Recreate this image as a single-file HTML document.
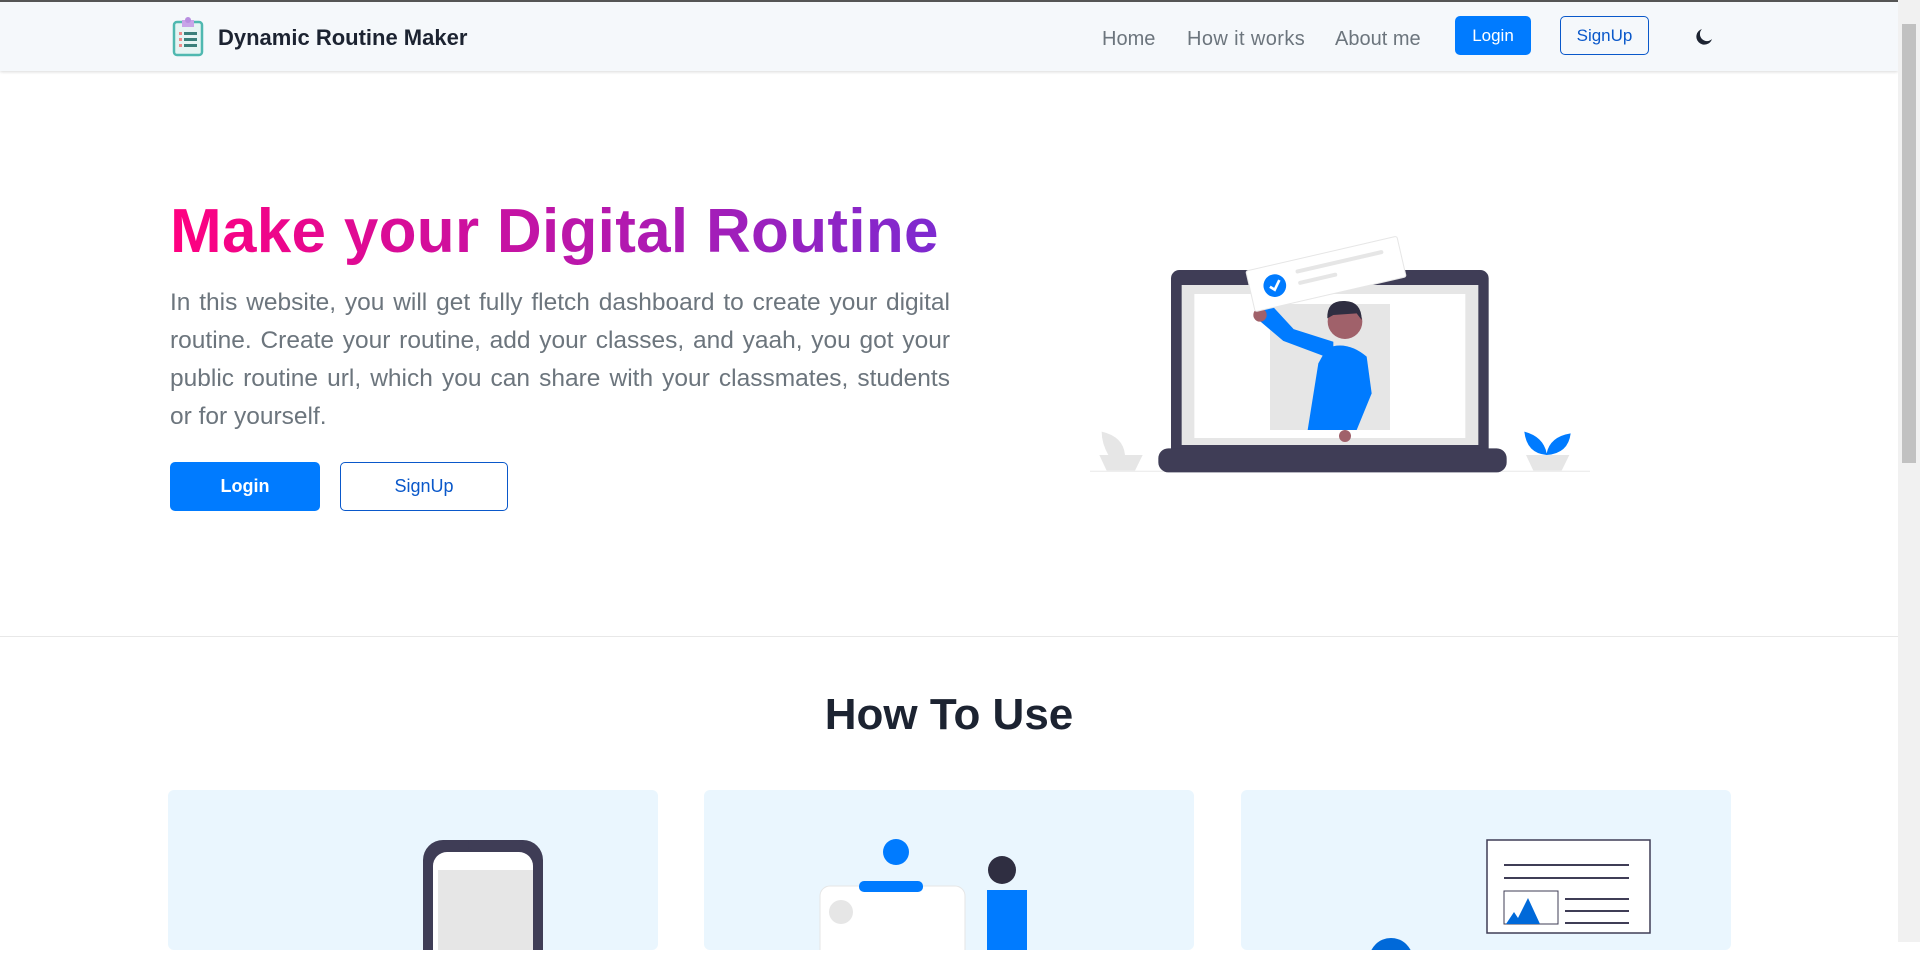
<!DOCTYPE html>
<html><head><meta charset="utf-8"><style>
*{margin:0;padding:0;box-sizing:border-box}
html,body{width:1920px;height:942px;overflow:hidden;background:#fff;font-family:"Liberation Sans",sans-serif}
.nav{position:absolute;left:0;top:0;width:1898px;height:71px;background:#f5f8fb;border-top:2px solid #555;box-shadow:0 1px 3px rgba(0,0,0,.15)}
.brand{position:absolute;left:218px;top:23px;font-size:22px;font-weight:bold;color:#1c2331}
.links a{position:absolute;top:26px;font-size:20px;color:#6c757d;text-decoration:none}
.btn{position:absolute;border-radius:5px;font-size:18px;text-align:center}
.h1{position:absolute;left:170px;top:196px;font-size:62px;font-weight:bold;letter-spacing:.3px;background:linear-gradient(90deg,#ff0080,#7d2ad0);-webkit-background-clip:text;background-clip:text;color:transparent;white-space:nowrap}
.p{position:absolute;left:170px;top:284px;width:780px;font-size:24.5px;line-height:38px;color:#6c757d}
.p div{text-align:justify;text-align-last:justify;white-space:nowrap}
.p div:last-child{text-align-last:left}
.hr{position:absolute;left:0;top:636px;width:1898px;height:1px;background:#e8e8e8}
.h2{position:absolute;left:0;width:1898px;top:690px;text-align:center;font-size:44px;font-weight:bold;color:#1c2331}
.card{position:absolute;top:790px;width:490px;height:160px;background:#eaf6fe;border-radius:6px}
.sb{position:absolute;right:0;top:0;width:22px;height:942px;background:#f1f1f1}
</style></head><body>
<div class="nav">
<svg style="position:absolute;left:172px;top:15px" width="32" height="40" viewBox="0 0 32 40"><rect x="2" y="5" width="28" height="33" rx="3" fill="#e6f4f3" stroke="#4fb8b0" stroke-width="2.5"/><path d="M10 3h12v7H10z" fill="#c8a4e8"/><circle cx="16" cy="3" r="3" fill="#b88ee0"/><g fill="#f08a8a"><rect x="7" y="15" width="3" height="3"/><rect x="7" y="21" width="3" height="3"/><rect x="7" y="27" width="3" height="3"/></g><g fill="#3a7f7a"><rect x="12" y="15" width="13" height="3"/><rect x="12" y="21" width="13" height="3"/><rect x="12" y="27" width="13" height="3"/></g></svg>
<div class="brand">Dynamic Routine Maker</div>
<div class="links"><a style="left:1102px">Home</a><a style="left:1187px;letter-spacing:.4px">How it works</a><a style="left:1335px">About me</a></div>
<div class="btn" style="left:1455px;top:14px;width:76px;height:39px;background:#007bff;color:#fff;line-height:39px;font-size:17px">Login</div>
<div class="btn" style="left:1560px;top:14px;width:89px;height:39px;border:1px solid #0a58ca;color:#0a58ca;line-height:37px;font-size:17px">SignUp</div>
<svg style="position:absolute;left:1695px;top:26px" width="18" height="18" viewBox="0 0 18 18"><path d="M7 1A8 8 0 1 0 17 11A7 7 0 0 1 7 1Z" fill="#1c2331"/></svg>
</div>
<div class="h1">Make your Digital Routine</div>
<div class="p"><div>In this website, you will get fully fletch dashboard to create your digital</div><div>routine. Create your routine, add your classes, and yaah, you got your</div><div>public routine url, which you can share with your classmates, students</div><div>or for yourself.</div></div>
<div class="btn" style="left:170px;top:462px;width:150px;height:49px;background:#007bff;color:#fff;line-height:49px;font-weight:bold">Login</div>
<div class="btn" style="left:340px;top:462px;width:168px;height:49px;border:1px solid #0a58ca;color:#0a58ca;line-height:47px">SignUp</div>
<svg style="position:absolute;left:1080px;top:220px" width="520" height="260" viewBox="0 0 1560 780">
<rect x="30" y="752" width="1500" height="4" fill="#eee"/>
<rect x="273" y="150" width="953" height="560" rx="25" fill="#3f3d56"/>
<rect x="305" y="195" width="890" height="480" fill="#e6e6e6"/>
<rect x="343" y="222" width="813" height="432" fill="#fff"/>
<rect x="570" y="252" width="360" height="378" fill="#e6e6e6"/>
<rect x="235" y="685" width="1045" height="72" rx="30" fill="#3f3d56"/>
<path d="M683 630L715 430L740 385Q800 360 860 410L875 520L830 630Z" fill="#007bff"/>
<path d="M740 390L620 345L555 290L570 280L630 345L740 380Z" fill="#007bff" stroke="#007bff" stroke-width="40"/>
<circle cx="795" cy="305" r="52" fill="#a0616a"/>
<path d="M742 295Q740 240 795 243Q845 245 845 300L830 280L760 285Z" fill="#2f2e41"/>
<circle cx="540" cy="285" r="20" fill="#a0616a"/><circle cx="795" cy="648" r="18" fill="#a0616a"/>
<g transform="rotate(-13 735 160)"><rect x="505" y="100" width="465" height="125" rx="6" fill="#fff" stroke="#e6e6e6" stroke-width="3"/><circle cx="580" cy="162" r="34" fill="#007bff"/><path d="M565 162l12 12l20-25" stroke="#fff" stroke-width="8" fill="none"/><rect x="650" y="130" width="270" height="12" rx="6" fill="#e6e6e6"/><rect x="650" y="165" width="120" height="12" rx="6" fill="#e6e6e6"/></g>
<path d="M65 635Q130 650 135 705H85Q65 670 65 635Z" fill="#e6e6e6"/><path d="M58 705H188L165 752H80Z" fill="#e6e6e6"/>
<path d="M1333 635Q1390 650 1400 700Q1410 650 1472 640Q1465 700 1400 705Q1340 700 1333 635Z" fill="#007bff"/><path d="M1338 705H1468L1445 752H1360Z" fill="#e6e6e6"/>
</svg>
<div class="hr"></div>
<div class="h2">How To Use</div>
<div class="card" style="left:168px"><svg width="490" height="160"><rect x="255" y="50" width="120" height="130" rx="20" fill="#3f3d56"/><rect x="265" y="62" width="100" height="120" rx="14" fill="#fff"/><rect x="270" y="80" width="95" height="100" fill="#e6e6e6"/><rect x="300" y="50" width="55" height="10" rx="4" fill="#3f3d56"/></svg></div>
<div class="card" style="left:704px"><svg width="490" height="160"><circle cx="192" cy="62" r="13" fill="#007bff"/><rect x="116" y="96" width="145" height="80" rx="10" fill="#fff" stroke="#e6e6e6"/><rect x="155" y="91" width="64" height="11" rx="5" fill="#007bff"/><circle cx="137" cy="122" r="12" fill="#e6e6e6"/><rect x="283" y="100" width="40" height="70" fill="#007bff"/><circle cx="298" cy="80" r="14" fill="#2f2e41"/></svg></div>
<div class="card" style="left:1241px"><svg width="490" height="160"><rect x="246" y="50" width="163" height="93" fill="#fff" stroke="#3f3d56" stroke-width="1.5"/><rect x="263" y="74" width="125" height="2" fill="#3f3d56"/><rect x="263" y="87" width="125" height="2" fill="#3f3d56"/><rect x="263" y="101" width="54" height="33" fill="none" stroke="#3f3d56"/><path d="M265 134l8-12l4 6l10-20l12 26z" fill="#0069d9"/><rect x="324" y="108" width="64" height="2" fill="#3f3d56"/><rect x="324" y="120" width="64" height="2" fill="#3f3d56"/><rect x="324" y="132" width="64" height="2" fill="#3f3d56"/><circle cx="150" cy="170" r="22" fill="#0069d9"/></svg></div>
<div class="sb"><div style="position:absolute;left:4px;top:24px;width:14px;height:439px;background:#c1c1c1"></div></div>
</body></html>
